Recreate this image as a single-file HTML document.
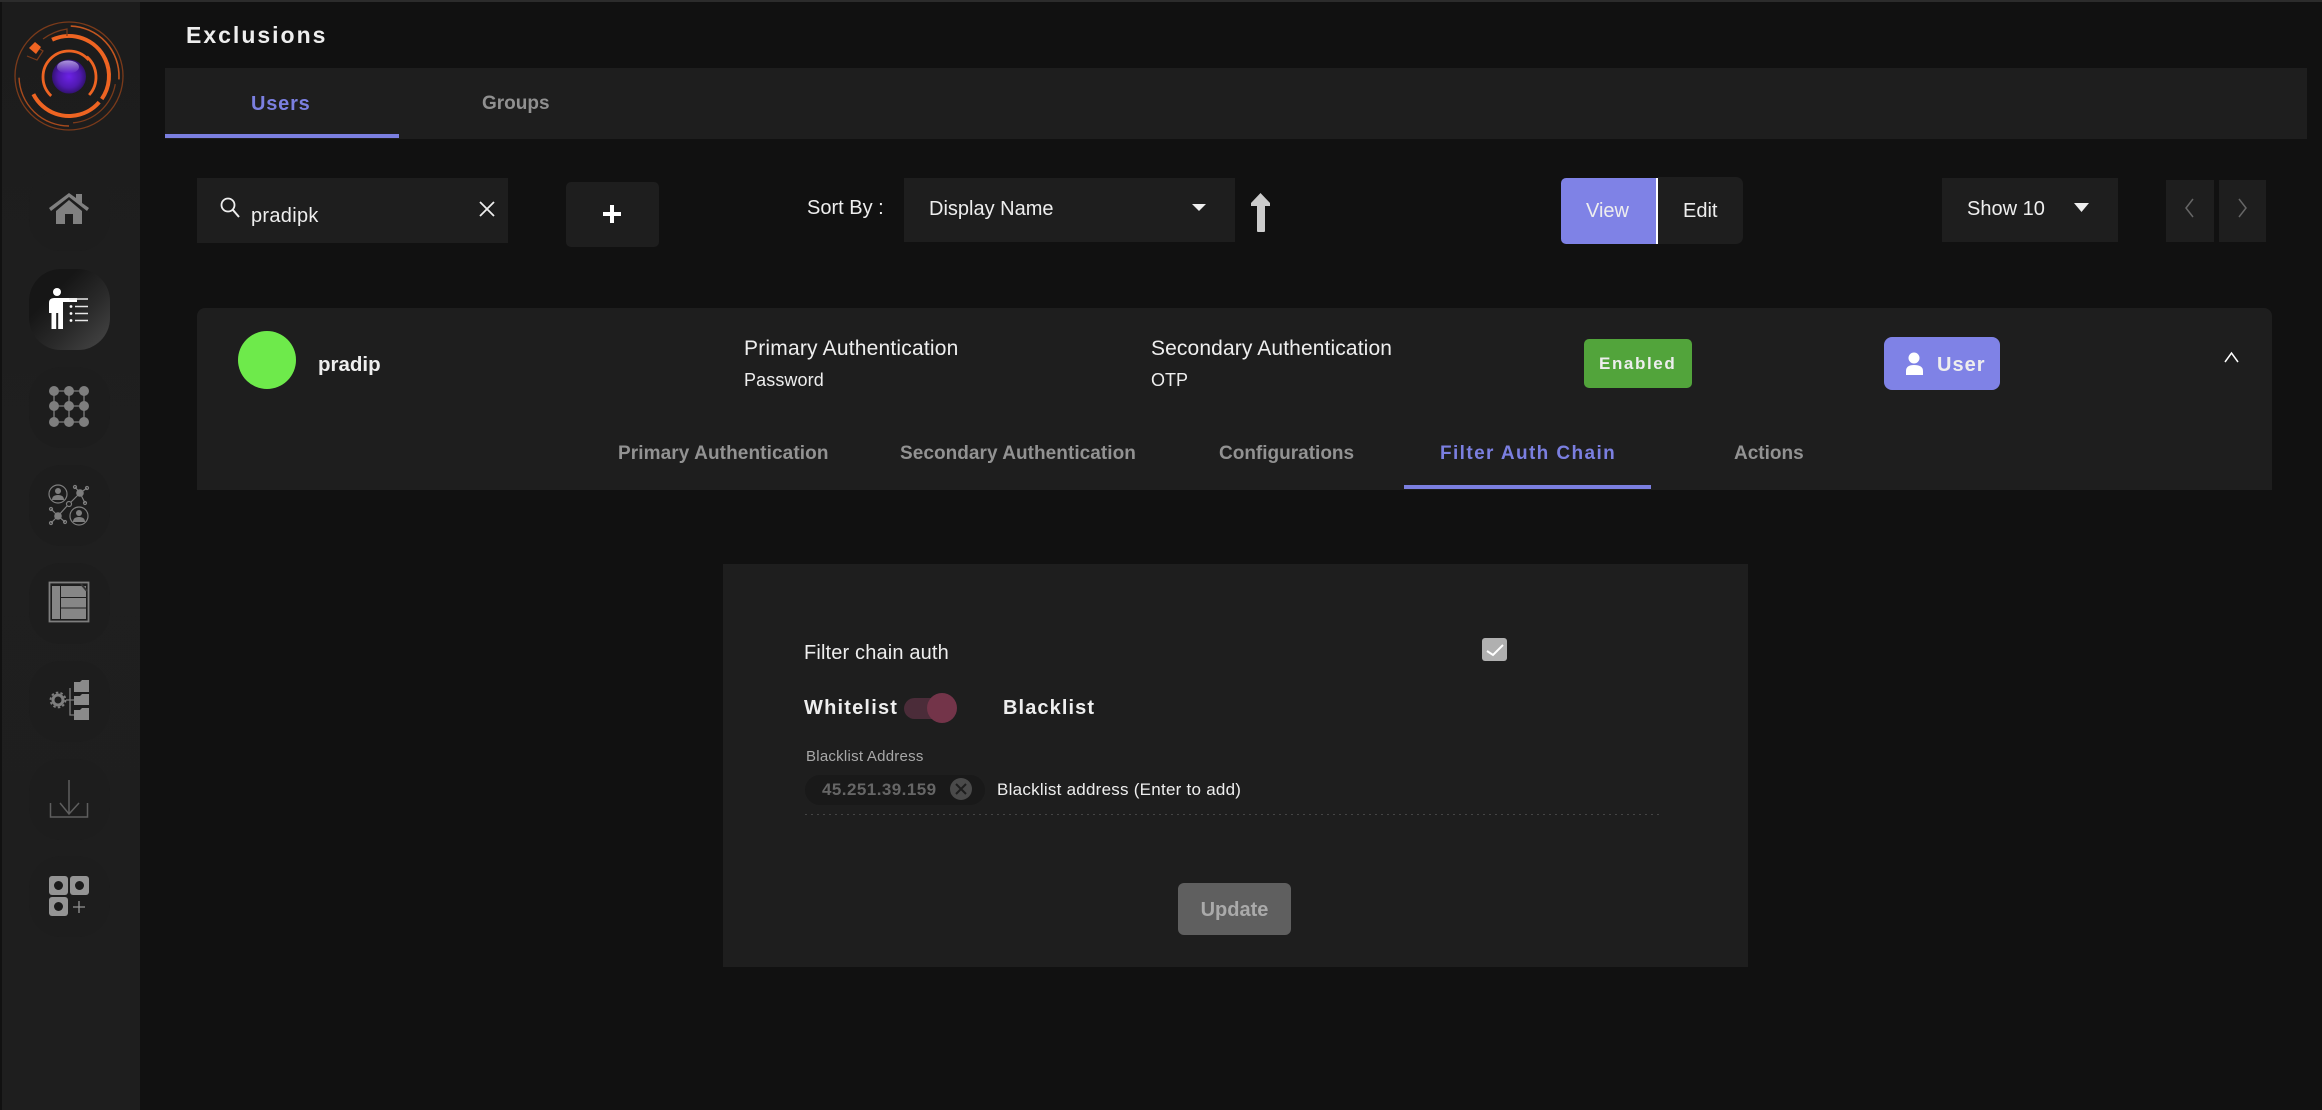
<!DOCTYPE html>
<html lang="en"><head><meta charset="utf-8"><title>Exclusions</title>
<style>
html,body{margin:0;padding:0;background:#111;width:2322px;height:1110px;overflow:hidden}
body{position:relative;font-family:"Liberation Sans",Arial,sans-serif;color:#eee}
.b{position:absolute;box-sizing:border-box}
.t{position:absolute;white-space:nowrap;line-height:30px;height:30px}
.s{position:absolute;width:81px;height:81px;left:29px;background:#1d1d1d;border-radius:32px}
svg{position:absolute;left:0;top:0}
</style></head><body>
<!-- sidebar -->
<div class="b" style="left:0;top:0;width:140px;height:1110px;background:linear-gradient(180deg,#1c1c1c,#1f1f1f 40%,#1e1e1e);border-left:2px solid #111"></div>
<div class="b" style="left:0;top:0;width:2322px;height:2px;background:#2c2c2c"></div>
<div class="s" style="top:170px"></div>
<div class="s" style="top:269px;background:linear-gradient(135deg,#161616 30%,#2a2a2a 62%,#484848)"></div>
<div class="s" style="top:367px"></div>
<div class="s" style="top:465px"></div>
<div class="s" style="top:563px"></div>
<div class="s" style="top:661px"></div>
<div class="s" style="top:759px"></div>
<div class="s" style="top:856px"></div>

<!-- header -->
<div class="t" style="left:186px;top:20px;font-size:23px;font-weight:bold;letter-spacing:2px">Exclusions</div>
<div class="b" style="left:165px;top:68px;width:2142px;height:71px;background:#1e1e1e"></div>
<div class="b" style="left:165px;top:134px;width:234px;height:4px;background:#7b7fe0"></div>
<div class="t" style="left:251px;top:89px;font-size:20px;font-weight:bold;letter-spacing:.8px;color:#7b7fe0">Users</div>
<div class="t" style="left:482px;top:89px;font-size:19px;font-weight:bold;color:#909090">Groups</div>

<!-- toolbar -->
<div class="b" style="left:197px;top:178px;width:311px;height:65px;background:#1e1e1e"></div>
<div class="t" style="left:251px;top:201px;font-size:20px;letter-spacing:.3px">pradipk</div>
<div class="b" style="left:566px;top:182px;width:93px;height:65px;background:#1e1e1e;border-radius:5px"></div>
<div class="t" style="left:807px;top:193px;font-size:20px">Sort By :</div>
<div class="b" style="left:904px;top:178px;width:331px;height:64px;background:#1e1e1e"></div>
<div class="t" style="left:929px;top:194px;font-size:20px">Display Name</div>
<div class="b" style="left:1561px;top:178px;width:95px;height:66px;background:#7f82e6;border-radius:5px 0 0 5px"></div>
<div class="b" style="left:1656px;top:178px;width:2px;height:66px;background:#fff"></div>
<div class="b" style="left:1658px;top:177px;width:85px;height:67px;background:#1e1e1e;border-radius:0 7px 7px 0"></div>
<div class="t" style="left:1586px;top:196px;font-size:20px">View</div>
<div class="t" style="left:1683px;top:196px;font-size:20px">Edit</div>
<div class="b" style="left:1942px;top:178px;width:176px;height:64px;background:#1e1e1e"></div>
<div class="t" style="left:1967px;top:194px;font-size:20px">Show 10</div>
<div class="b" style="left:2166px;top:180px;width:48px;height:62px;background:#1e1e1e"></div>
<div class="b" style="left:2219px;top:180px;width:47px;height:62px;background:#1e1e1e"></div>

<!-- card -->
<div class="b" style="left:197px;top:308px;width:2075px;height:110px;background:#1e1e1e;border-radius:8px 8px 0 0"></div>
<div class="b" style="left:197px;top:418px;width:2075px;height:72px;background:#1e1e1e"></div>
<div class="b" style="left:238px;top:331px;width:58px;height:58px;background:#6eea4b;border-radius:50%"></div>
<div class="t" style="left:318px;top:350px;font-size:20.500px;font-weight:bold">pradip</div>
<div class="t" style="left:744px;top:334px;font-size:21px;letter-spacing:.2px">Primary Authentication</div>
<div class="t" style="left:744px;top:365px;font-size:18px;letter-spacing:.1px">Password</div>
<div class="t" style="left:1151px;top:334px;font-size:21px;letter-spacing:.12px">Secondary Authentication</div>
<div class="t" style="left:1151px;top:365px;font-size:18px">OTP</div>
<div class="b" style="left:1584px;top:339px;width:108px;height:49px;background:#52a43b;border-radius:5px"></div>
<div class="t" style="left:1599px;top:349px;font-size:17px;font-weight:bold;letter-spacing:1.600px">Enabled</div>
<div class="b" style="left:1884px;top:337px;width:116px;height:53px;background:#7f82e6;border-radius:8px"></div>
<div class="t" style="left:1937px;top:350px;font-size:20px;font-weight:bold;letter-spacing:1px">User</div>

<div class="t" style="left:618px;top:439px;font-size:19px;font-weight:bold;letter-spacing:.1px;color:#929292">Primary Authentication</div>
<div class="t" style="left:900px;top:439px;font-size:19px;font-weight:bold;letter-spacing:.05px;color:#929292">Secondary Authentication</div>
<div class="t" style="left:1219px;top:439px;font-size:19px;font-weight:bold;color:#929292">Configurations</div>
<div class="t" style="left:1440px;top:439px;font-size:19px;font-weight:bold;letter-spacing:1.400px;color:#7b7fe0">Filter Auth Chain</div>
<div class="t" style="left:1734px;top:439px;font-size:19px;font-weight:bold;color:#929292">Actions</div>
<div class="b" style="left:1404px;top:485px;width:247px;height:4px;background:#7b7fe0"></div>

<!-- panel -->
<div class="b" style="left:723px;top:564px;width:1025px;height:403px;background:#1e1e1e"></div>
<div class="t" style="left:804px;top:638px;font-size:20px;letter-spacing:.15px">Filter chain auth</div>
<div class="b" style="left:1482px;top:638px;width:25px;height:23px;background:#b0b0b0;border-radius:3px"></div>
<div class="t" style="left:804px;top:693px;font-size:20px;font-weight:bold;letter-spacing:1.200px">Whitelist</div>
<div class="b" style="left:904px;top:698px;width:47px;height:21px;background:#4b2c39;border-radius:11px"></div>
<div class="b" style="left:927px;top:693px;width:30px;height:30px;background:#733449;border-radius:50%"></div>
<div class="t" style="left:1003px;top:693px;font-size:20px;font-weight:bold;letter-spacing:1.100px">Blacklist</div>
<div class="t" style="left:806px;top:742px;font-size:15px;letter-spacing:.25px;color:#a8a8a8">Blacklist Address</div>
<div class="b" style="left:805px;top:775px;width:180px;height:30px;background:#191919;border-radius:15px"></div>
<div class="t" style="left:822px;top:775px;font-size:17px;font-weight:bold;letter-spacing:.45px;color:#666">45.251.39.159</div>
<div class="t" style="left:997px;top:775px;font-size:17px;letter-spacing:.25px;color:#eee">Blacklist address (Enter to add)</div>
<div class="b" style="left:805px;top:814px;width:854px;height:1px;background:repeating-linear-gradient(90deg,#444 0 2px,transparent 2px 6px)"></div>
<div class="b" style="left:1178px;top:883px;width:113px;height:52px;background:#5f5f5f;border-radius:6px"></div>
<div class="t" style="left:1178px;top:895px;width:113px;text-align:center;font-size:20px;font-weight:bold;color:#aaa">Update</div>

<svg width="2322" height="1110" viewBox="0 0 2322 1110" fill="none">
<defs>
<radialGradient id="orb" cx="50%" cy="50%" r="55%"><stop offset="0" stop-color="#6c22e6"/><stop offset=".6" stop-color="#5019b0"/><stop offset="1" stop-color="#2a1060"/></radialGradient>
<linearGradient id="shine" x1="0" y1="0" x2="0" y2="1"><stop offset="0" stop-color="#c9b5f5" stop-opacity=".8"/><stop offset="1" stop-color="#c9b5f5" stop-opacity="0"/></linearGradient>
</defs>
<!-- logo -->
<g fill="none">
<circle cx="69" cy="76" r="54" stroke="#7a3a1a" stroke-width="1.300"/>
<circle cx="69" cy="76" r="50" stroke="#c4561f" stroke-width="1.600" pathLength="360" stroke-dasharray="92 268" transform="rotate(-88 69 76)"/>
<circle cx="69" cy="76" r="50" stroke="#a84a1c" stroke-width="1.400" pathLength="360" stroke-dasharray="88 272" transform="rotate(90 69 76)"/>
<circle cx="69" cy="76" r="47" stroke="#7a3a1a" stroke-width="1.300" pathLength="360" stroke-dasharray="75 285" transform="rotate(10 69 76)"/>
<circle cx="69" cy="76" r="40" stroke="#ee6422" stroke-width="4" pathLength="360" stroke-dasharray="150 210" transform="rotate(245 69 76)"/>
<circle cx="69" cy="76" r="40" stroke="#ee6422" stroke-width="4" pathLength="360" stroke-dasharray="112 248" transform="rotate(41 69 76)"/>
<circle cx="69" cy="77" r="26" stroke="#ee6422" stroke-width="2.800" pathLength="360" stroke-dasharray="185 175" transform="rotate(135 69 77)"/>
<circle cx="69" cy="77" r="27" stroke="#ee6422" stroke-width="2.800" pathLength="360" stroke-dasharray="90 270" transform="rotate(-48 69 77)"/>
<path d="M27 56L37 60 43 51 33 45M43 39Q54 31 67 29L67 36" stroke="#7a3a1a" stroke-width="1.200"/>
<path d="M35 42l6 5-5 7-7-6z" fill="#ee6422"/>
<circle cx="69" cy="76.500" r="17" fill="url(#orb)"/>
<ellipse cx="68" cy="67" rx="11" ry="6.500" fill="url(#shine)"/>
</g>

<!-- home -->
<g fill="#808080">
<path d="M49 208L69 193 76 198V194H82V203L89 208 87 211 69 197 51 211Z"/>
<path d="M56 211L69 200 82 211V224H73V214H65V224H56Z"/>
</g>
<!-- person list -->
<g fill="#fff">
<circle cx="57" cy="292" r="4"/>
<path d="M49 303Q49 298 54 298H77V302H63V329H58.200V313H56.200V329H51.500V313H49Z"/>
<circle cx="71" cy="306.500" r="1.400"/><circle cx="71" cy="313.500" r="1.400"/><circle cx="71" cy="320.500" r="1.400"/>
</g>
<g stroke="#e8e8e8" stroke-width="1.400">
<path d="M69 299H88M75 306.500H88M75 313.500H88M75 320.500H88"/>
</g>
<!-- grid -->
<g fill="#7e7e7e">
<circle cx="54" cy="391" r="5"/><circle cx="69" cy="391" r="5"/><circle cx="84" cy="391" r="5"/>
<circle cx="54" cy="406" r="5"/><circle cx="69" cy="406" r="5"/><circle cx="84" cy="406" r="5"/>
<circle cx="54" cy="422" r="5"/><circle cx="69" cy="422" r="5"/><circle cx="84" cy="422" r="5"/>
</g>
<path d="M54 391H84M54 406H84M54 422H84M54 391V422M69 391V422M84 391V422" stroke="#7e7e7e" stroke-width="1.300"/>
<!-- network -->
<g stroke="#7e7e7e" stroke-width="1.200">
<circle cx="58" cy="494" r="9"/><circle cx="79" cy="516" r="9"/>
<path d="M80 493L71 502M67 506L58 516M80 493L75 487M80 493L87 488M80 493L85 503M58 516L51 509M58 516L51 523M58 516L65 522"/>
<circle cx="69" cy="504" r="2.500"/>
<circle cx="75" cy="487" r="1.500"/><circle cx="87" cy="488" r="1.500"/><circle cx="85" cy="503" r="1.500"/>
<circle cx="51" cy="509" r="1.500"/><circle cx="51" cy="523" r="1.500"/><circle cx="65" cy="522" r="1.500"/>
</g>
<g fill="#7e7e7e">
<circle cx="80" cy="493" r="3.800"/><circle cx="58" cy="516" r="3.800"/>
<circle cx="58" cy="491" r="3"/><path d="M52 500Q52 495 58 495Q64 495 64 500Z"/>
<circle cx="79" cy="513" r="3"/><path d="M73 522Q73 517 79 517Q85 517 85 522Z"/>
</g>
<!-- layout -->
<rect x="49.500" y="582.500" width="39" height="39" stroke="#7e7e7e" stroke-width="1.800"/>
<g fill="#868686">
<rect x="52" y="586" width="8" height="33"/>
<rect x="61" y="586" width="25" height="11"/>
<rect x="61" y="598" width="25" height="9.500"/>
<rect x="61" y="608.500" width="25" height="10.500"/>
</g>
<path d="M81 584l6 7" stroke="#333" stroke-width="2"/>
<!-- gear folder -->
<circle cx="58" cy="700" r="5" stroke="#7e7e7e" stroke-width="3"/>
<circle cx="58" cy="700" r="7.500" stroke="#7e7e7e" stroke-width="1.800" stroke-dasharray="2.500 2.200"/>
<path d="M70 688V715H75M66 700H75" stroke="#7e7e7e" stroke-width="1.300"/>
<g fill="#8a8a8a">
<path d="M74 682H80L82 680H89V692H74Z"/>
<path d="M74 696H80L82 694H89V705H74Z"/>
<path d="M74 710H80L82 708H89V720H74Z"/>
</g>
<!-- download -->
<path d="M69 780V814M60 803L69 814 79 803M50.500 803V817H87.500V803" stroke="#5e5e5e" stroke-width="1.500"/>
<!-- apps -->
<g fill="#949494">
<rect x="49" y="876" width="19" height="19" rx="3"/><rect x="70" y="876" width="19" height="19" rx="3"/><rect x="49" y="897" width="19" height="19" rx="3"/>
</g>
<g fill="#1b1b1b"><circle cx="58.500" cy="885.500" r="4.500"/><circle cx="79.500" cy="885.500" r="4.500"/><circle cx="58.500" cy="906.500" r="4.500"/></g>
<path d="M79 901V913M73 907H85" stroke="#949494" stroke-width="1.300"/>

<!-- search -->
<circle cx="228" cy="205" r="6.500" stroke="#eee" stroke-width="1.800"/>
<path d="M233 210L239 217" stroke="#eee" stroke-width="2"/>
<path d="M480 202L494 216M494 202L480 216" stroke="#eee" stroke-width="1.800"/>
<path d="M612 205V223M603 214H621" stroke="#fff" stroke-width="4"/>
<path d="M1192 204H1206L1199 211Z" fill="#eee"/>
<path d="M1260.500 193L1270 203V206H1265V231Q1265 232 1264 232H1258Q1257 232 1257 231V206H1251V203Z" fill="#ccc"/>
<path d="M2074 203H2089L2081.500 212Z" fill="#eee"/>
<path d="M2193 199L2186 208 2193 217" stroke="#666" stroke-width="1.500"/>
<path d="M2239 199L2246 208 2239 217" stroke="#666" stroke-width="1.500"/>
<path d="M2225 362L2231.500 353 2238 362" stroke="#fff" stroke-width="1.500"/>
<!-- user -->
<circle cx="1914" cy="358" r="5.500" fill="#fff"/>
<path d="M1906 375V371Q1906 365 1914 365Q1923 365 1923 371V375Z" fill="#fff"/>
<!-- check -->
<path d="M1487 651L1493 655 1503 645" stroke="#fff" stroke-width="2"/>
<!-- chip x -->
<circle cx="961" cy="789" r="11" fill="#4a4a4a"/>
<path d="M956 784L966 794M966 784L956 794" stroke="#1e1e1e" stroke-width="2"/>
</svg>
</body></html>
